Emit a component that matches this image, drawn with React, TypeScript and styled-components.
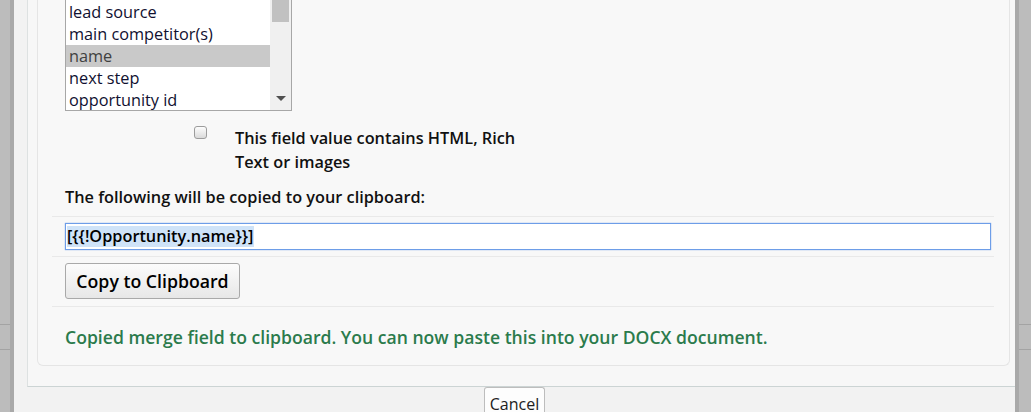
import React from 'react';
import styled, { createGlobalStyle } from 'styled-components';

const GlobalStyle = createGlobalStyle`
    html, body {
        margin: 0;
        padding: 0;
        overflow: hidden;
    }
    body {
        font-family: "Open Sans", "Noto Sans", sans-serif;
        color: #111;
    }
`

/**
 * BACKDROP (page behind the dialog)
 */

const Backdrop = styled('div')`
    height: 412px;
    overflow: hidden;
    display: flex;
    padding: 0 12px 0 10px;
    background-color: #bcbcbc;
    background-image:
        linear-gradient(#a3a3a3, #a3a3a3),
        linear-gradient(#a3a3a3, #a3a3a3);
    background-size: 100% 1px;
    background-repeat: no-repeat;
    background-position: 0 324px, 0 349px;
`

const Dialog = styled('div')`
    flex: 1;
    display: flex;
    flex-direction: column;
    background: #f2f2f2;
    border-left: 4px solid #a9a9a9;
    border-right: 4px solid #a9a9a9;
`

const DialogBody = styled('div')`
    margin-left: 13px;
    padding: 0 5px 20px 9px;
    background: #f7f7f7;
    border-left: 1px solid #dde1e1;
    border-bottom: 1px solid #ccd4d4;
`

const Card = styled('div')`
    background: #f8f8f8;
    border: 1px solid #e5e5e5;
    border-top: none;
    border-radius: 0 0 6px 6px;
`

/**
 * FORM ROWS
 */

interface RowProps {
    $divided?: boolean;
    $pad?: string;
}

const Row = styled('div')<RowProps>`
    margin: 0 15px 0 14px;
    padding: ${p => p.$pad || '0'};
    padding-left: 13px;
    border-top: ${p => (p.$divided ? '1px solid #e9e9e9' : 'none')};
`

/**
 * LIST BOX
 */

const ListBox = styled('div')`
    display: flex;
    width: 227px;
    height: 111px;
    box-sizing: border-box;
    border: 1px solid #a7a7a7;
    border-top: none;
    background: #fff;
`

const Options = styled('ul')`
    flex: 1;
    list-style: none;
    margin: 0;
    padding: 1px 0 0;
    overflow: hidden;
`

const Option = styled('li')<{ $selected?: boolean }>`
    height: 22px;
    line-height: 22px;
    padding-left: 3px;
    font-size: 16.3px;
    white-space: nowrap;
    color: ${p => (p.$selected ? '#404040' : '#101030')};
    background: ${p => (p.$selected ? '#c9c9c9' : 'transparent')};
`

const ScrollTrack = styled('div')`
    width: 21px;
    display: flex;
    flex-direction: column;
    justify-content: space-between;
    align-items: center;
    background: #f0f0f0;
`

const ScrollThumb = styled('div')`
    align-self: stretch;
    margin: 0 2px;
    height: 22px;
    background: #c1c1c1;
`

const ScrollArrow = styled('div')`
    width: 0;
    height: 0;
    margin-bottom: 9px;
    border-left: 5px solid transparent;
    border-right: 5px solid transparent;
    border-top: 5px solid #505050;
`

/**
 * CHECKBOX
 */

const CheckRow = styled('label')`
    display: flex;
    align-items: flex-start;
    gap: 28px;
    margin-top: 15px;
    padding-left: 129px;
`

const Check = styled('input')`
    appearance: none;
    flex: none;
    width: 13px;
    height: 13px;
    margin: 0;
    border: 1px solid #9c9c9c;
    border-radius: 3px;
    background: linear-gradient(#fdfdfd, #dadada);
`

const CheckText = styled('span')`
    width: 300px;
    font-size: 16.3px;
    font-weight: 600;
    line-height: 24px;
    color: #111;
`

const FieldLabel = styled('div')`
    font-size: 16.3px;
    font-weight: 600;
    line-height: 24px;
    padding: 11px 0 7px;
    color: #111;
`

/**
 * MERGE FIELD BOX
 */

const MergeField = styled('div')`
    width: 926px;
    height: 27px;
    box-sizing: border-box;
    display: flex;
    align-items: center;
    padding: 0 1px;
    background: #fff;
    border: 1px solid #6d9de8;
    box-shadow: 0 0 1px #6d9de8;
    font-size: 16.3px;
    font-weight: 600;
    color: #000;
`

const Selection = styled('span')`
    background: #cfe3f8;
    line-height: 21px;
    padding-right: 1px;
`

/**
 * BUTTONS
 */

const Button = styled('button')`
    width: 175px;
    height: 36px;
    padding: 0;
    border: 1px solid #a9a9a9;
    border-radius: 3px;
    background: linear-gradient(#fcfcfc, #e7e7e7);
    font-family: inherit;
    font-size: 17.7px;
    font-weight: 600;
    color: #000;
`

const SuccessText = styled('div')`
    padding: 19px 0 17px;
    line-height: 22px;
    font-size: 17.6px;
    font-weight: 600;
    color: #2b7b4c;
`

const Footer = styled('div')`
    display: flex;
    justify-content: center;
`

const CancelButton = styled('button')`
    width: 61px;
    height: 25px;
    padding: 7px 0 0;
    line-height: 16px;
    border: 1px solid #bdbdbd;
    border-bottom: none;
    border-radius: 3px 3px 0 0;
    background: #fdfdfd;
    font-family: inherit;
    font-size: 16px;
    color: #222;
`

const fields = ['lead source', 'main competitor(s)', 'name', 'next step', 'opportunity id'];

export default function App() {
    return (
        <>
            <GlobalStyle />
            <Backdrop>
                <Dialog>
                    <DialogBody>
                        <Card>
                            <Row>
                                <ListBox>
                                    <Options>
                                        {fields.map(f => (
                                            <Option key={f} $selected={f === 'name'}>{f}</Option>
                                        ))}
                                    </Options>
                                    <ScrollTrack>
                                        <ScrollThumb />
                                        <ScrollArrow />
                                    </ScrollTrack>
                                </ListBox>
                                <CheckRow>
                                    <Check type="checkbox" />
                                    <CheckText>This field value contains HTML, Rich Text or images</CheckText>
                                </CheckRow>
                                <FieldLabel>The following will be copied to your clipboard:</FieldLabel>
                            </Row>
                            <Row $divided $pad="6px 0 6px">
                                <MergeField>
                                    <Selection>[{'{{'}!Opportunity.name{'}}'}]</Selection>
                                </MergeField>
                            </Row>
                            <Row $divided $pad="6px 0 7px">
                                <Button>Copy to Clipboard</Button>
                            </Row>
                            <Row $divided>
                                <SuccessText>
                                    Copied merge field to clipboard. You can now paste this into your DOCX document.
                                </SuccessText>
                            </Row>
                        </Card>
                    </DialogBody>
                    <Footer>
                        <CancelButton>Cancel</CancelButton>
                    </Footer>
                </Dialog>
            </Backdrop>
        </>
    )
}
